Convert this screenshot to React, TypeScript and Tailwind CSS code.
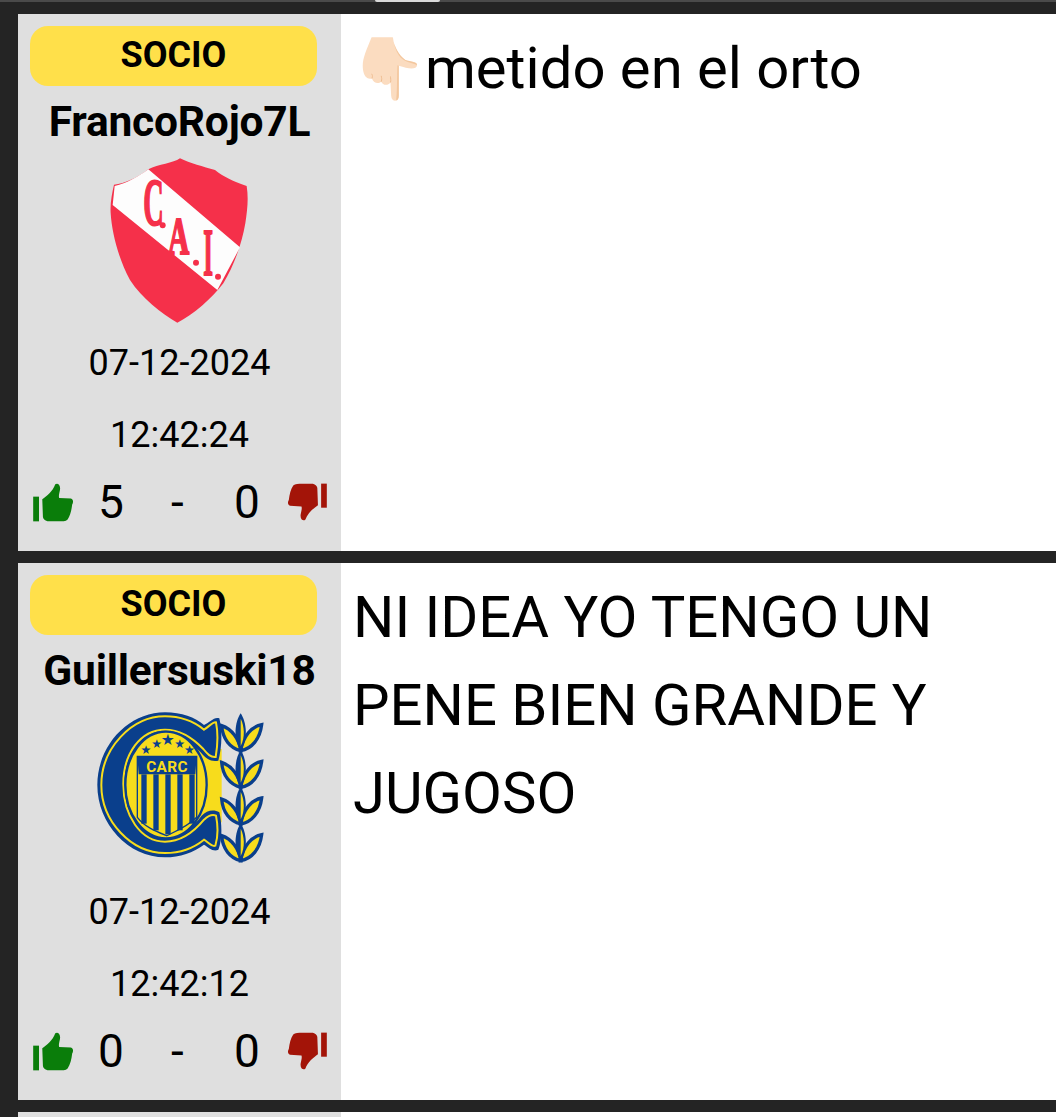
import { FC, ReactNode } from 'react'

const CaiCrest: FC = () => (
  <svg viewBox="0 0 540 540" className="w-[180px] h-[180px]">
    <path d="M270 25 C250 40 205 42 175 58 C140 85 105 100 72 104 C66 130 60 160 62 190 C66 250 85 325 120 390 C155 445 215 490 262 518 C310 495 365 445 400 400 C430 350 455 285 466 220 C472 180 476 145 470 108 C430 95 400 80 375 60 C340 50 300 40 270 25 Z" fill="#f5304a" />
    <path d="M175 58 L450 292 L382 420 L68 165 L74 108 C110 100 145 80 175 58 Z" fill="#fdfdfd" />
    <g fill="#f5304a" stroke="#f5304a" strokeWidth="5" fontFamily="'Liberation Serif', serif" fontWeight="700">
      <text x="0" y="0" fontSize="170" transform="translate(160 225) scale(0.5 1.2)">C</text>
      <text x="0" y="0" fontSize="130" transform="translate(234 313) scale(0.68 1.2)">A</text>
      <text x="0" y="0" fontSize="170" transform="translate(340 376) scale(0.44 1.2)">I</text>
    </g>
    <circle cx="218" cy="226" r="9" fill="#f5304a" />
    <circle cx="318" cy="338" r="9" fill="#f5304a" />
    <circle cx="384" cy="380" r="9" fill="#f5304a" />
  </svg>
)

const laurel = (y: number) => (
  <g key={y}>
    <path d={`M425 ${y - 75} C428 ${y - 35} 450 ${y - 8} 482 ${y} C478 ${y - 35} 455 ${y - 65} 425 ${y - 75} Z`} fill="#f7dc1c" stroke="#0a3f8c" strokeWidth="10" />
    <path d={`M545 ${y - 78} C515 ${y - 72} 490 ${y - 45} 482 ${y} C515 ${y - 5} 540 ${y - 35} 545 ${y - 78} Z`} fill="#f7dc1c" stroke="#0a3f8c" strokeWidth="10" />
    <path d={`M482 ${y} C505 ${y - 35} 500 ${y - 85} 482 ${y - 112} C464 ${y - 85} 459 ${y - 35} 482 ${y} Z`} fill="#0a3f8c" />
    <path d={`M482 ${y - 14} C496 ${y - 40} 493 ${y - 75} 482 ${y - 96} Z`} fill="#f7dc1c" />
  </g>
)

const CarcCrest: FC = () => (
  <svg viewBox="0 0 600 525" className="w-[200px] h-[175px]">
    <path d="M240 110 L425 150 L425 370 L240 420 Z" fill="#f7dc1c" />
    <path d="M255 40 C305 40 345 55 372 78 C390 70 402 52 418 58 C428 100 425 150 415 185 C395 190 378 180 362 160 C335 130 295 105 255 105 C195 105 150 170 150 255 C150 345 195 415 255 415 C300 415 340 385 365 350 C380 335 400 330 418 340 C428 380 425 430 415 452 C400 460 385 445 372 437 C340 460 300 475 255 475 C145 475 52 375 52 258 C52 140 145 40 255 40 Z" fill="#0a3f8c" />
    <path d="M255 52 C305 52 342 68 372 92 C388 82 398 68 408 70 C415 105 412 145 407 174 C392 176 382 165 370 150 C340 118 298 92 255 92 C180 92 130 165 130 255 C130 350 182 428 255 428 C305 428 345 395 372 362 C385 350 398 345 408 350 C415 385 412 420 406 440 C395 445 385 430 372 422 C340 448 300 462 255 462 C155 462 64 368 64 258 C64 148 155 52 255 52 Z" fill="none" stroke="#f7dc1c" strokeWidth="6" />
    <ellipse cx="258" cy="258" rx="122" ry="160" fill="#f7dc1c" stroke="#0a3f8c" strokeWidth="7" />
    <path d="M172 172 L350 172 L350 355 C320 385 285 398 260 410 C230 398 195 385 172 355 Z" fill="#f7dc1c" stroke="#0a3f8c" strokeWidth="4" />
    <path d="M172 172 L350 172 L346 226 L176 226 Z" fill="#0a3f8c" />
    <text x="261" y="219" textAnchor="middle" fontSize="46" fontWeight="700" letterSpacing="1" fill="#f7dc1c" fontFamily="Roboto, sans-serif">CARC</text>
    {[184, 220, 256, 292, 328].map((x) => (
      <path key={x} d={`M${x} 226 h16 v${x === 256 ? 180 : x === 184 || x === 328 ? 148 : 168} h-16 Z`} fill="#0a3f8c" />
    ))}
    {[[198, 152, 14], [230, 134, 14], [263, 126, 18], [299, 134, 14], [328, 152, 14]].map(([x, y, s]) => (
      <text key={x} x={x} y={y + 12} textAnchor="middle" fontSize={s * 2.6} fill="#0a3f8c" fontFamily="'DejaVu Sans', sans-serif">★</text>
    ))}
    {[155, 265, 375, 485].map(laurel)}
  </svg>
)

const PointingHand: FC = () => (
  <svg viewBox="36 33 172 197" className="w-[57px] h-[66px] shrink-0">
    <path d="M68 36 L132 36 C134 60 150 92 170 104 C185 110 206 108 205 120 C204 134 180 132 150 122 L150 212 C150 232 128 232 127 212 L125 172 C118 182 102 182 97 170 C90 176 74 176 69 160 C58 164 46 158 42 134 C38 105 50 80 68 36 Z" fill="#fbdcc0" />
    <path d="M132 36 C134 60 150 92 170 104 C185 110 206 108 205 120 C190 112 165 112 150 90 C140 75 135 55 132 36 Z" fill="#f3c79e" />
    <path d="M150 122 L150 212 C150 222 146 226 142 226 C146 190 144 150 146 120 Z" fill="#f3c79e" />
    <path d="M69 160 C72 152 70 150 68 146 M97 170 C100 162 98 158 97 152 M125 172 C127 164 125 160 125 154" stroke="#eebd92" strokeWidth="3" fill="none" />
  </svg>
)

const Thumb: FC<{ className: string }> = ({ className }) => (
  <svg viewBox="0 0 126 120" fill="currentColor" className={className}>
    <path d="M2 42 H20 V118 H2 Z" />
    <path d="M30 50 C44 40 62 26 70 4 C78 -2 88 8 84 24 C82 34 80 40 82 46 L118 48 C126 50 126 60 122 66 C120 84 116 100 108 112 C102 118 92 118 78 118 L46 118 C38 116 32 110 32 104 Z" />
  </svg>
)

type PostProps = {
  user: string
  crest: ReactNode
  date: string
  time: string
  up: number
  down: number
  children: ReactNode
}

const Post: FC<PostProps> = ({ user, crest, date, time, up, down, children }) => {
  return (
    <div className="flex h-[537px] ml-[18px] bg-white">
      <div className="w-[323px] h-full shrink-0 bg-[#dfdfdf] flex flex-col text-black">
        <div className="mt-[12px] ml-[12px] w-[287px] h-[60px] shrink-0 rounded-[18px] bg-[#ffe04a] flex items-center justify-center font-bold text-[36px] leading-[58px] pb-[2px]">
          SOCIO
        </div>
        <div className="mt-[14px] h-[44px] leading-[44px] text-center font-bold text-[42.5px] tracking-[-0.2px] whitespace-nowrap">{user}</div>
        <div className="mt-[6px] h-[177px] flex justify-center shrink-0">{crest}</div>
        <div className="h-[72px] leading-[72px] text-center text-[36px]">{date}</div>
        <div className="h-[72px] leading-[72px] text-center text-[36px]">{time}</div>
        <div className="flex items-center pl-[14px] h-[44px] mt-[9px] text-[46px]">
          <Thumb className="w-[42px] h-[39px] text-[#0a7d0a]" />
          <span className="ml-[24px] w-[26px]">{up}</span>
          <span className="ml-[47px] w-[13px]">-</span>
          <span className="ml-[50px] w-[26px]">{down}</span>
          <Thumb className="ml-[27px] w-[41px] h-[38px] text-[#a31408] rotate-180" />
        </div>
      </div>
      <div className="flex-1 pt-[10px] pl-[12px] pr-[90px] text-[58px] leading-[88px] text-black">{children}</div>
    </div>
  )
}

const App: FC = () => {
  return (
    <div className="h-[1117px] w-full overflow-hidden bg-[#242424] font-['Roboto',sans-serif]">
      <div className="h-[14px]">
        <div className="h-[2px] bg-[#4a4a4a]">
          <div className="ml-[375px] w-[65px] h-[2px] bg-[#d9d9d9] rounded-b-full" />
        </div>
      </div>
      <Post user="FrancoRojo7L" crest={<CaiCrest />} date="07-12-2024" time="12:42:24" up={5} down={0}>
        <div className="flex items-start">
          <div className="ml-[8px] mt-[12px]"><PointingHand /></div>
          <span className="ml-[7px]">metido en el orto</span>
        </div>
      </Post>
      <div className="h-[12px]" />
      <Post user="Guillersuski18" crest={<CarcCrest />} date="07-12-2024" time="12:42:12" up={0} down={0}>
        NI IDEA YO TENGO UN PENE BIEN GRANDE Y JUGOSO
      </Post>
      <div className="h-[12px]" />
      <div className="flex h-[40px] ml-[18px] bg-white">
        <div className="w-[323px] bg-[#dfdfdf]" />
      </div>
    </div>
  )
}

export default App
